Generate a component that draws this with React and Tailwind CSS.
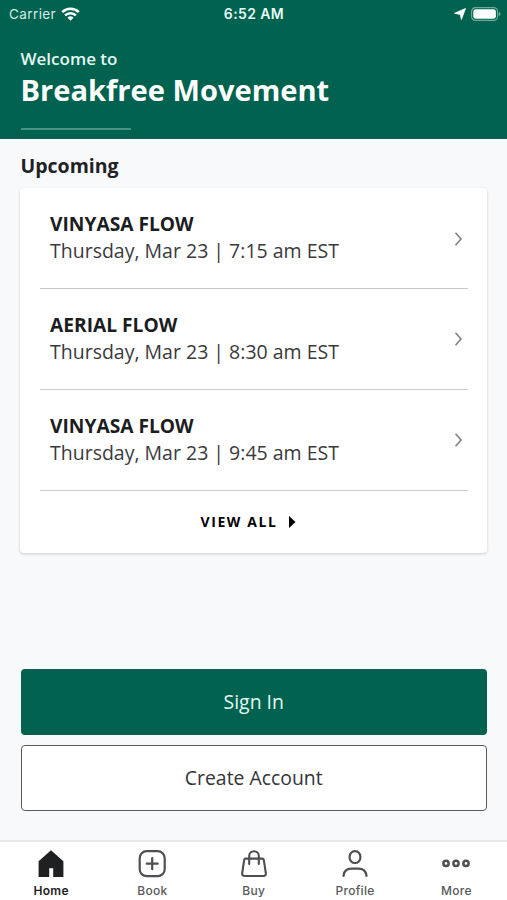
const classes = [
  { name: "VINYASA FLOW", time: "Thursday, Mar 23 | 7:15 am EST" },
  { name: "AERIAL FLOW", time: "Thursday, Mar 23 | 8:30 am EST" },
  { name: "VINYASA FLOW", time: "Thursday, Mar 23 | 9:45 am EST" },
];

function StatusBar() {
  return (
    <div className="grid h-7 grid-cols-3 items-center pl-[9px] pr-[6px] font-['Inter',sans-serif] text-[13.5px] leading-7">
      <div className="flex items-center gap-[5px] text-[#d3eee5]">
        <span className="tracking-[0.4px]">Carrier</span>
        <svg className="-mt-px" width="19" height="14" viewBox="0 0 19 14" fill="none" stroke="#fff" strokeWidth="2.6">
          <path d="M1.2 5.1a12 12 0 0 1 16.6 0" />
          <path d="M4.1 8.4a7.7 7.7 0 0 1 10.8 0" />
          <path d="M9.5 13.7 6.5 10.7a4.3 4.3 0 0 1 6 0Z" fill="#fff" stroke="none" />
        </svg>
      </div>
      <div className="-ml-[2px] text-center text-[14px] font-semibold tracking-[0.4px] text-[#e6faf3]">6:52 AM</div>
      <div className="-mt-px flex items-center justify-end gap-[5px]">
        <svg width="12" height="12" viewBox="0 0 12 12" fill="#fff" stroke="#fff" strokeWidth=".8" strokeLinejoin="round">
          <path d="M11.5.5 7.4 11.5 6.2 6.4 .5 5.3Z" />
        </svg>
        <svg width="30" height="14" viewBox="0 0 30 14">
          <rect x=".6" y=".6" width="26" height="12.8" rx="3.8" fill="none" stroke="#6eaa98" strokeWidth="1.2" />
          <rect x="2.3" y="2.3" width="22.6" height="9.4" rx="2.4" fill="#fff" />
          <path d="M27.8 4.7q1.8.7 1.8 2.3t-1.8 2.3Z" fill="#6eaa98" />
        </svg>
      </div>
    </div>
  );
}

function ClassRow({ item }) {
  return (
    <li className="flex h-[100.6px] items-center justify-between border-b-[1.5px] border-[#c8c9ca] pl-[10px] pr-[5px]">
      <div className="pb-[2.4px] text-[19.5px] leading-[27px] text-[#3a3a3c]">
        <div className="text-[19.2px] font-bold text-[#1c1d1f]">{item.name}</div>
        <div>{item.time}</div>
      </div>
      <svg width="9" height="14" viewBox="0 0 9 14" fill="none" stroke="#858585" strokeWidth="1.7">
        <path d="M1.5.8 7 7l-5.5 6.2" />
      </svg>
    </li>
  );
}

function HomeIcon() {
  return (
    <svg width="28" height="28" viewBox="0 0 28 28" fill="#1e2022">
      <path d="M14 .2 26.4 11.2V27H16.2V18.2H12.2V27H1.6V11.2Z" />
    </svg>
  );
}

function BookIcon() {
  return (
    <svg width="28" height="28" viewBox="0 0 28 28" fill="none" stroke="#4d4f52" strokeWidth="2.2" strokeLinecap="round">
      <rect x="1.7" y="1.2" width="25" height="25" rx="7" />
      <path d="M14.2 8.2v11M8.7 13.7h11" />
    </svg>
  );
}

function BuyIcon() {
  return (
    <svg width="28" height="28" viewBox="0 0 28 28" fill="none" stroke="#4d4f52" strokeWidth="2.1" strokeLinecap="round" strokeLinejoin="round">
      <path d="M5.6 8.6h16.8q1.2 0 1.4 1.2l2 13.2q.4 3-2.6 3H4.8q-3 0-2.6-3l2-13.2q.2-1.2 1.4-1.2Z" />
      <path d="M9.2 14V6a4.8 4.8 0 0 1 9.6 0v8" />
    </svg>
  );
}

function ProfileIcon() {
  return (
    <svg width="28" height="28" viewBox="0 0 28 28" fill="none" stroke="#4d4f52" strokeWidth="2.2" strokeLinecap="round">
      <rect x="8.6" y="1.2" width="10.8" height="11.8" rx="5.4" />
      <path d="M2.6 26v-.8q.8-6.6 8-6.6h6.8q7.200 0 8 6.600v.8" />
    </svg>
  );
}

function MoreIcon() {
  return (
    <svg width="28" height="28" viewBox="0 0 28 28" fill="none" stroke="#4d4f52" strokeWidth="2.5">
      <circle cx="4" cy="13.4" r="2.6" />
      <circle cx="14" cy="13.4" r="2.6" />
      <circle cx="24" cy="13.4" r="2.6" />
    </svg>
  );
}

const tabs = [
  { label: "Home", Icon: HomeIcon, active: true },
  { label: "Book", Icon: BookIcon },
  { label: "Buy", Icon: BuyIcon },
  { label: "Profile", Icon: ProfileIcon },
  { label: "More", Icon: MoreIcon },
];

export default function App() {
  return (
    <div className="flex h-[900px] w-full flex-col bg-[#f8f9fb] font-['Open_Sans','Noto_Sans',sans-serif]">
      <header className="h-[139px] shrink-0 bg-[#00624f]">
        <StatusBar />
        <div className="px-[20.5px] pt-[19px] text-white">
          <p className="text-[17px] font-semibold leading-[24px] text-[#e3f8f1]">Welcome to</p>
          <h1 className="text-[29.1px] font-bold leading-[38px]">Breakfree Movement</h1>
          <div className="mt-[19px] h-[1.5px] w-[110px] bg-[#4b9683]" />
        </div>
      </header>

      <main className="flex flex-1 flex-col px-[20px]">
        <h2 className="pl-[0.5px] pt-[13px] text-[19.5px] font-bold leading-[27px] text-[#202124]">Upcoming</h2>
        <section className="mt-[9px] h-[365px] rounded-[4px] bg-white pl-[20px] pr-[19px] shadow-[0_1px_3px_rgba(0,0,0,0.18)]">
          <ul className="pt-[0.8px]">
            {classes.map((item, i) => (
              <ClassRow key={i} item={item} />
            ))}
          </ul>
          <button className="flex h-[62px] w-full items-center justify-center gap-[11px] pr-[12px] text-[14px] font-bold tracking-[1.6px] text-black">
            VIEW ALL
            <svg width="7" height="12" viewBox="0 0 7 12">
              <path d="M0 0 6.5 6 0 12Z" />
            </svg>
          </button>
        </section>

        <div className="mt-auto flex flex-col gap-[10px] pb-[29px] pl-[0.5px]">
          <button className="h-[66px] rounded-[4px] bg-[#00624f] text-[19.4px] text-[#e3f8f1]">Sign In</button>
          <button className="h-[66px] rounded-[4px] border-[1.5px] border-[#58595b] bg-white text-[19.4px] text-[#333436]">
            Create Account
          </button>
        </div>
      </main>

      <nav className="grid h-[60px] shrink-0 grid-cols-5 border-t-2 border-[#e6e7e9] bg-white pl-[0.5px] font-['Inter',sans-serif]">
        {tabs.map(({ label, Icon, active }) => (
          <a key={label} className={`flex flex-col items-center pt-[8px] ${active ? "text-[#1e2022]" : "text-[#57595c]"}`}>
            <Icon />
            <span className={`mt-[5px] text-[12px] leading-4 tracking-[0.3px] ${active ? "font-semibold" : "font-medium"}`}>{label}</span>
          </a>
        ))}
      </nav>
    </div>
  );
}
